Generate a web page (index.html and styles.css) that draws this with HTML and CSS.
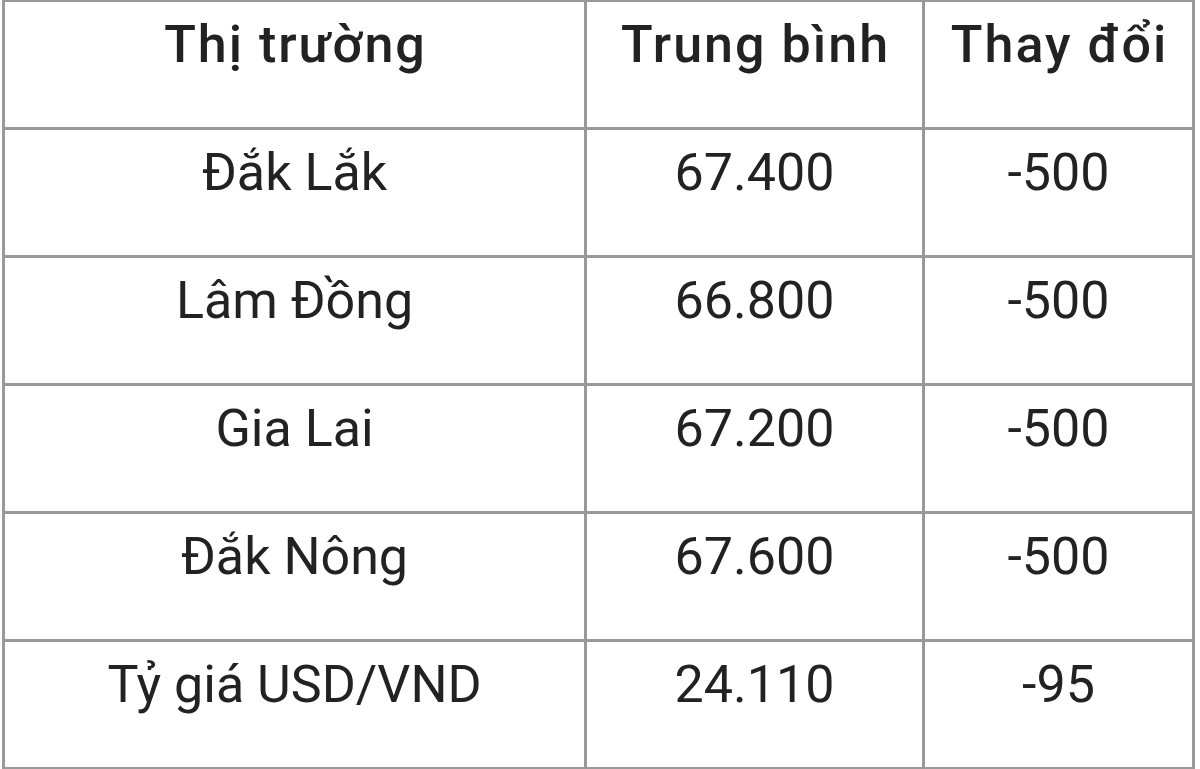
FILE: index.html
```html
<!DOCTYPE html>
<html lang="vi">
<head>
<meta charset="utf-8">
<title>Giá cà phê</title>
<link rel="stylesheet" href="styles.css">
</head>
<body>
<table class="price-table">
  <colgroup>
    <col class="col-market">
    <col class="col-avg">
    <col class="col-change">
  </colgroup>
  <thead>
    <tr>
      <th>Thị trường</th>
      <th>Trung bình</th>
      <th>Thay đổi</th>
    </tr>
  </thead>
  <tbody>
    <tr><td>Đắk Lắk</td><td>67.400</td><td>-500</td></tr>
    <tr><td>Lâm Đồng</td><td>66.800</td><td>-500</td></tr>
    <tr><td>Gia Lai</td><td>67.200</td><td>-500</td></tr>
    <tr><td>Đắk Nông</td><td>67.600</td><td>-500</td></tr>
    <tr><td>Tỷ giá USD/VND</td><td>24.110</td><td>-95</td></tr>
  </tbody>
</table>
</body>
</html>
```

FILE: styles.css
```css
html, body {
  margin: 0;
  padding: 0;
  background: #ffffff;
}

body {
  font-family: Roboto, "Liberation Sans", sans-serif;
  color: #222222;
  overflow: hidden;
}

.price-table {
  margin: -1px 0 0 2px;
  width: 1193px;
  table-layout: fixed;
  border-collapse: separate;
  border-spacing: 0;
  border-left: 3px solid #999999;
  border-top: 3px solid #999999;
}

.col-market { width: 582px; }
.col-avg { width: 338px; }
.col-change { width: 270px; }

.price-table th,
.price-table td {
  border-right: 3px solid #999999;
  border-bottom: 3px solid #999999;
  padding: 12px 4px 52px;
  font-size: 52px;
  line-height: 61px;
  text-align: center;
  white-space: nowrap;
}

.price-table th {
  font-weight: 500;
  letter-spacing: 2px;
  text-indent: 2px;
}

.price-table td {
  font-weight: 400;
}
```
